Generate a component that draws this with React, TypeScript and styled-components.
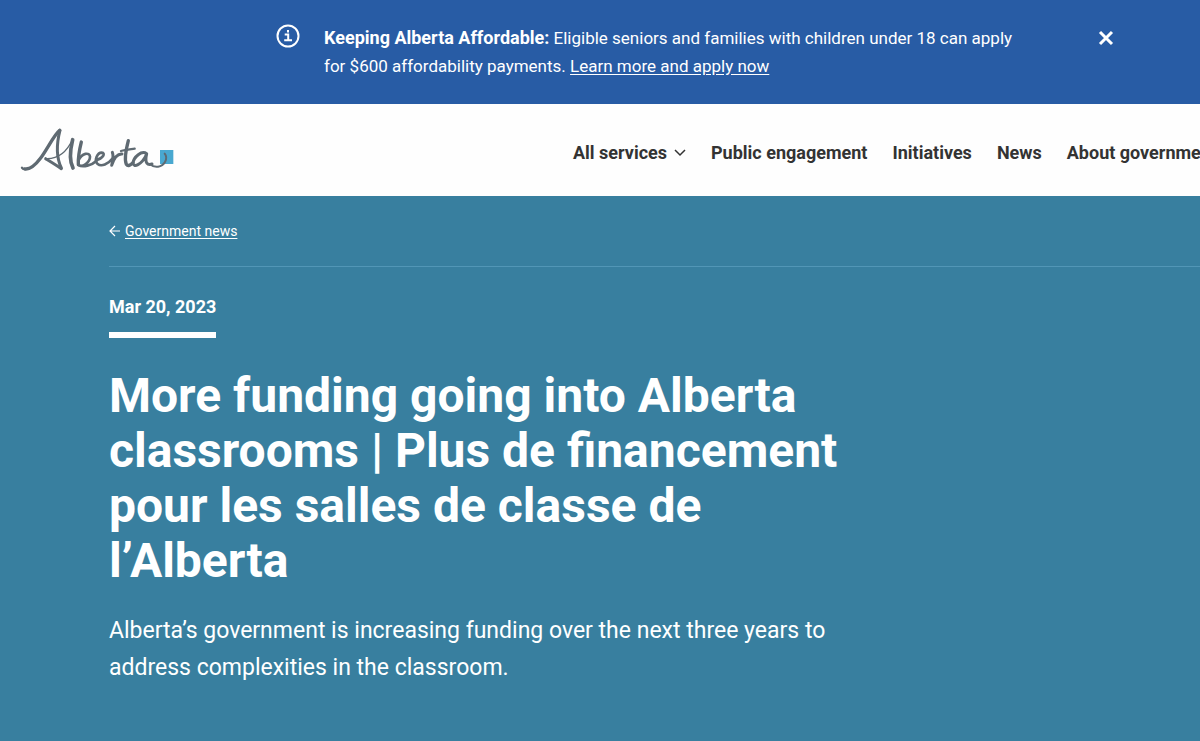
import React from "react";
import styled, { createGlobalStyle } from "styled-components";

const GlobalStyle = createGlobalStyle`
  *, *::before, *::after { box-sizing: border-box; }
  html, body { margin: 0; overflow-x: hidden; }
  body {
    background: #387f9f;
    color: #333333;
    font-family: Roboto, "Liberation Sans", sans-serif;
    font-size: 18px;
    line-height: 28px;
  }
`;

const Banner = styled.aside`
  display: flex;
  align-items: flex-start;
  padding: 24px 86px 24px 23%;
  background: #285ca5;
  color: #ffffff;
`;

const InfoIcon = styled.svg`
  flex: none;
  width: 24px;
  height: 24px;
  margin-right: 24px;
`;

const BannerText = styled.p`
  flex: 0 1 710px;
  margin: 0;
  font-size: 17px;
`;

const BannerLead = styled.strong`
  font-size: 18px;
`;

const BannerLink = styled.a`
  color: inherit;
  text-decoration: underline;
  text-underline-offset: 2px;
`;

const CloseButton = styled.button`
  display: flex;
  margin: 6px 0 0 auto;
  padding: 0;
  border: 0;
  background: none;
  color: inherit;
  cursor: pointer;
`;

const Header = styled.header`
  display: flex;
  align-items: center;
  height: 92px;
  padding-left: 20px;
  background: #fefefe;
  overflow: hidden;
`;

const LogoLink = styled.a`
  flex: none;
  display: flex;
`;

const Nav = styled.nav`
  flex: none;
  margin-left: auto;
  margin-right: -17px;
`;

const NavList = styled.ul`
  display: flex;
  gap: 25px;
  margin: 0;
  padding: 6px 0 0;
  list-style: none;
`;

const NavLink = styled.a`
  display: flex;
  align-items: center;
  gap: 7px;
  color: #333333;
  font-weight: 700;
  text-decoration: none;
  white-space: nowrap;
`;

const Hero = styled.main`
  padding: 23px 0 56px 109px;
  color: #ffffff;
`;

const Breadcrumb = styled.nav`
  padding-bottom: 22px;
  border-bottom: 1px solid #5296b6;
  font-size: 14px;
  line-height: 24px;
`;

const BackLink = styled.a`
  display: inline-flex;
  align-items: center;
  gap: 5px;
  color: inherit;
  text-decoration: none;
`;

const BackLabel = styled.span`
  text-decoration: underline;
  text-underline-offset: 2px;
`;

const PostDate = styled.time`
  display: table;
  margin-top: 26px;
  padding-bottom: 11px;
  border-bottom: 6px solid #ffffff;
  font-weight: 700;
`;

const Title = styled.h1`
  max-width: 760px;
  margin: 30px 0 24px;
  font-size: 48px;
  font-weight: 700;
  line-height: 55px;
`;

const Lead = styled.p`
  max-width: 740px;
  margin: 0;
  font-size: 23px;
  line-height: 37px;
`;

const Logo = () => (
  <svg width="156" height="48" viewBox="30 33 468 144" role="img" aria-label="Alberta" fill="none">
    <rect x="450" y="105" width="40" height="42" fill="#49a8d0" />
    <g stroke="#5f6a72" strokeLinecap="round" strokeLinejoin="round">
      <path strokeWidth="7" d="M36 158 C40 163 47 163 54 159" />
      <path strokeWidth="10" d="M45 162 C62 164 77 149 92 129 C112 102 133 58 149 46" />
      <path strokeWidth="9" d="M150 46 C141 80 138 125 154 159" />
      <path strokeWidth="9" d="M154 161 C140 151 125 142 107 131" />
      <path strokeWidth="4" d="M107 131 C145 133 172 108 188 73" />
      <path strokeWidth="11" d="M188 74 C181 103 178 139 189 159" />
      <path strokeWidth="10" d="M214 81 C208 105 204 130 205 149" />
      <path strokeWidth="8" d="M205 137 C216 113 239 111 240 125 C240 141 218 159 205 150 C219 158 245 151 260 137" />
      <path strokeWidth="8" d="M258 135 C279 131 288 114 275 113 C262 113 251 137 263 147 C274 156 295 147 306 132" />
      <path strokeWidth="9" d="M307 112 C312 125 308 138 305 151 C311 132 322 116 336 117" />
      <path strokeWidth="10" d="M355 77 C347 108 343 135 349 148 C354 155 361 151 369 143" />
      <path strokeWidth="7" d="M333 108 C346 104 360 103 374 101" />
      <path strokeWidth="9" d="M410 116 C395 105 371 126 369 144 C369 159 395 151 410 117 C403 146 413 151 426 147" />
      <path strokeWidth="6" d="M420 148 C434 160 456 157 465 141 C470 132 469 122 464 116" />
    </g>
  </svg>
);

const links = ["Public engagement", "Initiatives", "News", "About government"];

export default function App() {
  return (
    <>
      <GlobalStyle />
      <Banner>
        <InfoIcon viewBox="0 0 24 24" fill="none" stroke="currentColor" strokeWidth="2" aria-hidden="true">
          <circle cx="12" cy="12" r="10.5" />
          <path d="M8.7 10.6h3.5V16M8.2 16.2h7.8" />
          <path d="M12 6v2.4" />
        </InfoIcon>
        <BannerText>
          <BannerLead>Keeping Alberta Affordable:</BannerLead> Eligible seniors and families with children under 18 can
          apply for $600 affordability payments. <BannerLink href="#apply">Learn more and apply now</BannerLink>
        </BannerText>
        <CloseButton type="button" aria-label="Close">
          <svg width="16" height="16" viewBox="0 0 16 16" stroke="currentColor" strokeWidth="3" aria-hidden="true">
            <path d="M2 2l12 12M14 2L2 14" />
          </svg>
        </CloseButton>
      </Banner>
      <Header>
        <LogoLink href="#home">
          <Logo />
        </LogoLink>
        <Nav aria-label="Main">
          <NavList>
            <li>
              <NavLink href="#services">
                All services
                <svg width="12" height="8" viewBox="0 0 12 8" fill="none" stroke="currentColor" strokeWidth="1.5" aria-hidden="true">
                  <path d="M1 1l5 5 5-5" />
                </svg>
              </NavLink>
            </li>
            {links.map((label) => (
              <li key={label}>
                <NavLink href="#nav">{label}</NavLink>
              </li>
            ))}
          </NavList>
        </Nav>
      </Header>
      <Hero>
        <Breadcrumb aria-label="Breadcrumb">
          <BackLink href="#news">
            <svg width="11" height="12" viewBox="0 0 11 12" fill="none" stroke="currentColor" strokeWidth="1.2" aria-hidden="true">
              <path d="M11 6H1M6 1L1 6l5 5" />
            </svg>
            <BackLabel>Government news</BackLabel>
          </BackLink>
        </Breadcrumb>
        <PostDate dateTime="2023-03-20">Mar 20, 2023</PostDate>
        <Title>More funding going into Alberta classrooms | Plus de financement pour les salles de classe de l’Alberta</Title>
        <Lead>
          Alberta’s government is increasing funding over the next three years to address complexities in the classroom.
        </Lead>
      </Hero>
    </>
  );
}
